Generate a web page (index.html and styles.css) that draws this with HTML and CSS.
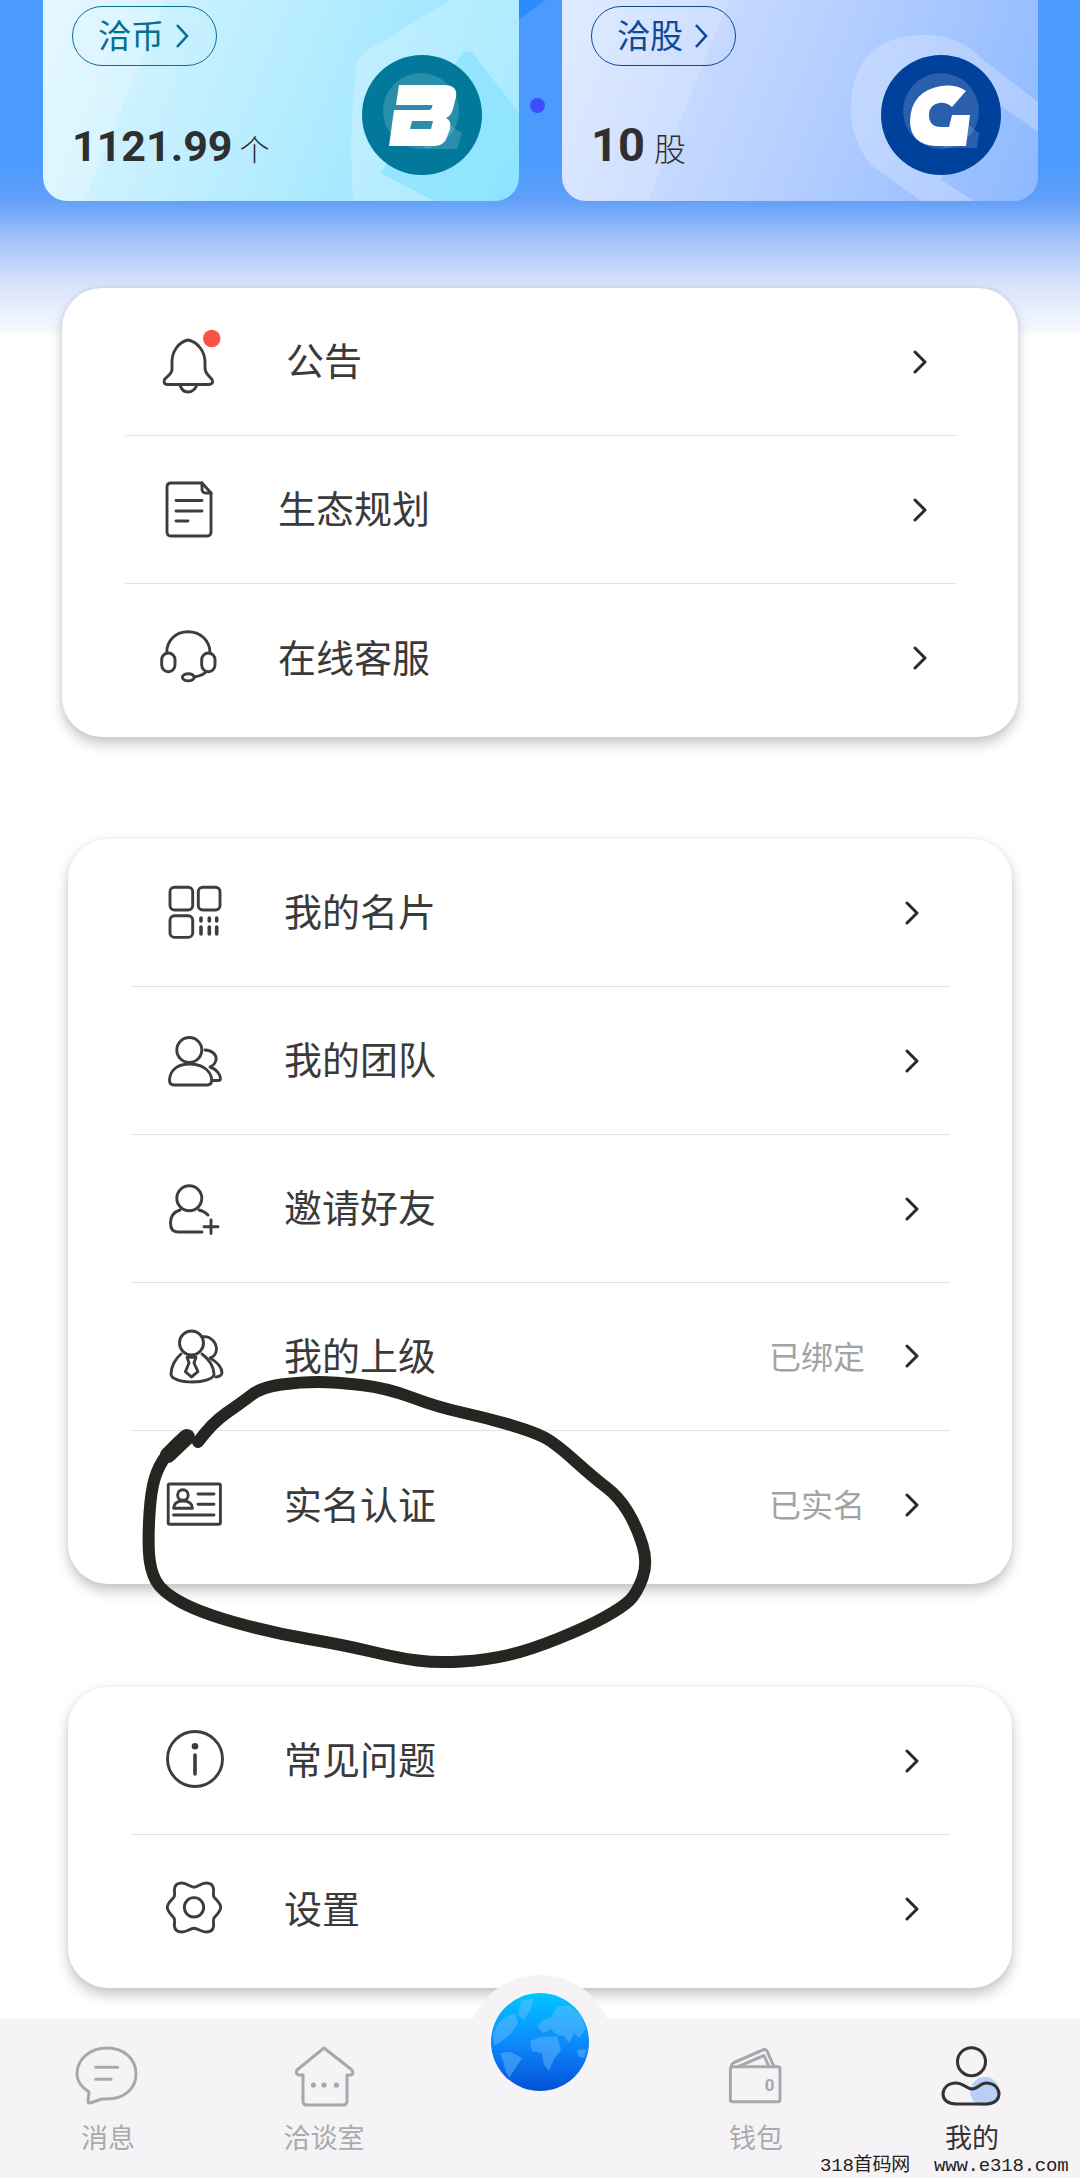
FILE: index.html
```html
<!DOCTYPE html>
<html lang="zh-CN">
<head>
<meta charset="utf-8">
<title>我的</title>
<link rel="stylesheet" href="styles.css">
</head>
<body>
<div class="page">
  <header class="hero">
    <span class="hero-wedge"></span>
    <span class="hero-dot"></span>
    <section class="asset asset-coin">
      <svg class="asset-decor" viewBox="0 0 476 201"><path class="decor-a" d="M314 63 Q320 50 335 44 L407 0 L476 0 L476 143 L440 201 L310 201 Q305 130 314 63Z"/><path class="decor-b" d="M337 173 L420 53 Q426 48 432 56 L476 113 L476 143 L440 201 L392 201Z"/></svg>
      <a class="pill pill-coin">洽币<svg class="pill-arrow" viewBox="0 0 14 26"><path d="M2 2 L12 13 L2 24"/></svg></a>
      <div class="amount"><b class="amount-num">1121.99</b><span class="amount-unit">个</span></div>
      <svg class="asset-logo" viewBox="0 0 120 120">
        <circle class="logo-coin" cx="60" cy="60" r="60"/>
        <circle class="logo-q" cx="59" cy="56" r="38"/><path class="logo-q" d="M75 62 L100 78 L95 94 L62 94Z"/>
        <path class="logo-mark" fill-rule="evenodd" d="M37 30 L82 30 Q96 30 94 42 L91 54 Q89 61 84 63 Q90 66 88 74 L85 82 Q82 91 72 91 L27 91 L32 55 L67 55 Q70 55 70.5 50 L34 50Z M50 66 L71 66 L69 74 L48 74Z"/>
      </svg>
    </section>
    <section class="asset asset-share">
      <svg class="asset-decor" viewBox="0 0 476 201"><path class="decor-a" d="M364 35 Q397 35 419 58 L476 102 L476 132 L424 95 L379 180 L412 201 L359 201 L309 165 Q289 140 289 110 Q289 35 364 35Z"/></svg>
      <a class="pill pill-share">洽股<svg class="pill-arrow" viewBox="0 0 14 26"><path d="M2 2 L12 13 L2 24"/></svg></a>
      <div class="amount amount-share"><b class="amount-num">10</b><span class="amount-unit">股</span></div>
      <svg class="asset-logo" viewBox="0 0 120 120">
        <circle class="logo-share" cx="60" cy="60" r="60"/>
        <circle class="logo-q" cx="60" cy="56" r="38"/><path class="logo-q" d="M78 62 L98 78 L96 93 L62 93Z"/>
        <path class="logo-mark" d="M85 36 L71 52 Q65 47 58 48 Q48 50 48 60 Q48 72 60 72 L68 72 L71 60 L89 60 L85 91 L54 91 Q29 89 29 66 Q30 36 60 31 Q75 29 85 36Z"/>
      </svg>
    </section>
  </header>

  <main class="menus">
    <section class="menu menu-top">
      <div class="row">
        <div class="icon-box"><svg class="icon" viewBox="0 0 60 60"><path d="M30.3 8 C20 10 14 20 14 30 L14 37 Q14 41 10 44 L6.5 47.5 Q5 52 9 52.5 L51 52.5 Q56 52 54 47.5 L50 43 Q47 40 47 36 L47 30 C47 20 40 10 30.3 8Z"/><path d="M22 53 Q24 60 30 60 Q36 60 39 53"/><circle class="bell-dot" cx="53.7" cy="6.5" r="8.7"/></svg></div>
        <span class="row-title row-title-inset">公告</span>
        <div class="row-end"><svg class="chevron" viewBox="0 0 14 24"><path d="M2 2 L12 12 L2 22"/></svg></div>
      </div>
      <div class="row">
        <div class="icon-box"><svg class="icon" viewBox="0 0 60 60"><path d="M13 3 L44 3 L53 13 L53 52 Q53 56 49 56 L13 56 Q9 56 9 52 L9 7 Q9 3 13 3Z"/><path d="M44 3 L44 9 Q44 13 48 13 L53 13"/><path d="M18 20.5 H44 M18 31 H44 M18 41 H30"/></svg></div>
        <span class="row-title">生态规划</span>
        <div class="row-end"><svg class="chevron" viewBox="0 0 14 24"><path d="M2 2 L12 12 L2 22"/></svg></div>
      </div>
      <div class="row">
        <div class="icon-box"><svg class="icon" viewBox="0 0 60 60"><path d="M8.7 25 C8.7 12 18 3.7 30 3.7 C42 3.7 52 12 52 25"/><rect x="3.7" y="25" width="13.3" height="18.7" rx="6.6"/><rect x="43.7" y="25" width="13.3" height="18.7" rx="6.6"/><path d="M48 43.7 Q46 47 36 49"/><ellipse cx="30.3" cy="49.3" rx="6" ry="3.6"/></svg></div>
        <span class="row-title">在线客服</span>
        <div class="row-end"><svg class="chevron" viewBox="0 0 14 24"><path d="M2 2 L12 12 L2 22"/></svg></div>
      </div>
    </section>

    <section class="menu">
      <div class="row">
        <div class="icon-box"><svg class="icon" viewBox="-1 0 60 60"><rect x="5" y="4.3" width="22.7" height="22.7" rx="4.5"/><rect x="33.3" y="4.3" width="21.7" height="22.7" rx="4.5"/><rect x="5" y="32.7" width="22.7" height="21.7" rx="4.5"/><path class="thick" d="M36 35 V38 M44.3 35 V38 M51.7 35 V38 M36 44 V51 M44.3 44 V51 M51.7 44 V51"/></svg></div>
        <span class="row-title">我的名片</span>
        <div class="row-end"><svg class="chevron" viewBox="0 0 14 24"><path d="M2 2 L12 12 L2 22"/></svg></div>
      </div>
      <div class="row">
        <div class="icon-box"><svg class="icon" viewBox="-1 0 60 60"><circle cx="24.3" cy="19" r="12.5"/><path d="M9 54 Q4.5 54 4.5 49 C5 38 14 33 24.5 33 C35 33 46 38 46.7 49 Q46.7 54 42 54Z"/><path d="M40 19 C47 19 52 24 51 29 C50 33 48 35 45 36 C51 38 55.5 43 55.5 48 Q55.5 49.5 53 49.5 L47 49.5"/></svg></div>
        <span class="row-title">我的团队</span>
        <div class="row-end"><svg class="chevron" viewBox="0 0 14 24"><path d="M2 2 L12 12 L2 22"/></svg></div>
      </div>
      <div class="row">
        <div class="icon-box"><svg class="icon" viewBox="-1 0 60 60"><circle cx="24.3" cy="19.3" r="12.5"/><path d="M15 31 Q5.5 34 5.5 44 Q5.5 53 13 53 L37 53"/><path d="M34 31 Q39 32 43 36"/><path d="M39 47.7 H53 M46 41 V54.5"/></svg></div>
        <span class="row-title">邀请好友</span>
        <div class="row-end"><svg class="chevron" viewBox="0 0 14 24"><path d="M2 2 L12 12 L2 22"/></svg></div>
      </div>
      <div class="row">
        <div class="icon-box"><svg class="icon" viewBox="-1 0 60 60"><circle cx="26.5" cy="16" r="12"/><path d="M38 9.7 C46 9 52 16 51.4 23 C51 27 48 30 45 31 C52 35 57 40 57 46 C57 48 54 50 50.7 50"/><path d="M16 27 C10 32 6 40 6 47 C6 52 16 55 27.5 55 C38 55 49 52 49 47 C49 40 44 32 37 27"/><path d="M22 30.3 H31 L29 36 L33 44.7 L26.4 50 L20.4 44.7 L24 36Z"/></svg></div>
        <span class="row-title">我的上级</span>
        <div class="row-end"><span class="row-status">已绑定</span><svg class="chevron" viewBox="0 0 14 24"><path d="M2 2 L12 12 L2 22"/></svg></div>
      </div>
      <div class="row">
        <div class="icon-box"><svg class="icon" viewBox="-1 0 60 60"><rect x="3.2" y="9" width="52.2" height="40.3" rx="1.5"/><circle cx="17.9" cy="20" r="5.3"/><path d="M8.6 33.3 Q9 26 17.9 26 Q27 26 27.5 33.3Z"/><path d="M33 19 H49 M33 29.3 H49 M8.6 40 H49"/></svg></div>
        <span class="row-title">实名认证</span>
        <div class="row-end"><span class="row-status">已实名</span><svg class="chevron" viewBox="0 0 14 24"><path d="M2 2 L12 12 L2 22"/></svg></div>
      </div>
    </section>

    <section class="menu">
      <div class="row">
        <div class="icon-box"><svg class="icon" viewBox="-1 0 60 60"><circle cx="30" cy="28" r="27.5"/><circle class="icon-fill" cx="30" cy="15.3" r="3.3"/><path class="thick" d="M30 24 V43"/></svg></div>
        <span class="row-title">常见问题</span>
        <div class="row-end"><svg class="chevron" viewBox="0 0 14 24"><path d="M2 2 L12 12 L2 22"/></svg></div>
      </div>
      <div class="row">
        <div class="icon-box"><svg class="icon" viewBox="-1 0 60 60"><path d="M29 8.3 C33 8.3 36 4 41 4 C46 4 48 6 48.5 9.5 C49 14 47.5 15.5 49 18 C51 21 55.7 24 55.7 28.3 C55.7 33 51 36 49 39 C47.5 41.5 49 43 48.5 47.5 C48 51 46 53 41 53 C36 53 33 49.3 29 49.3 C25 49.3 22 53 17 53 C12 53 10 51 9.5 47.5 C9 43 10.5 41.5 9 39 C7 36 2.3 33 2.3 28.3 C2.3 24 7 21 9 18 C10.5 15.5 9 14 9.5 9.5 C10 6 12 4 17 4 C22 4 25 8.3 29 8.3Z"/><circle cx="29" cy="28.3" r="9.7"/></svg></div>
        <span class="row-title">设置</span>
        <div class="row-end"><svg class="chevron" viewBox="0 0 14 24"><path d="M2 2 L12 12 L2 22"/></svg></div>
      </div>
    </section>
  </main>

  <nav class="tabbar">
    <a class="tab">
      <svg class="tab-icon" viewBox="0 0 60 60"><path d="M11 47 C3 42 -1 36 -1 29 C-1 14 12 3 29 3 C46 3 58 14 58 29 C58 44 46 54 29 54 L24 54 L12 58 Q9.5 58.5 10 56Z"/><path d="M17.7 22.3 H39.8 M17.7 34.3 H33"/></svg>
      <span>消息</span>
    </a>
    <a class="tab">
      <svg class="tab-icon" viewBox="0 0 60 60"><path d="M30 3 L58 25 Q60 29 57 30 L53 30 L53 56 Q53 60 49 60 L13 60 Q9 60 9 56 L9 30 L5 30 Q1 29 3 25Z"/><circle class="tab-fill" cx="19.4" cy="40" r="2.6"/><circle class="tab-fill" cx="30" cy="40" r="2.6"/><circle class="tab-fill" cx="42.4" cy="40" r="2.6"/></svg>
      <span>洽谈室</span>
    </a>
    <div class="tab tab-hub-slot"></div>
    <a class="tab">
      <svg class="tab-icon" viewBox="0 0 60 60"><rect x="4.4" y="21.7" width="49.6" height="35" rx="2"/><path d="M5.5 22 Q5 19 8 17.5 L38 4.5 Q40 4 41 6 L48 21.7"/><path d="M12 21.7 L38 10.5 L43 21.7"/><text class="wallet-zero" x="43.7" y="45.5">0</text></svg>
      <span>钱包</span>
    </a>
    <a class="tab tab-active">
      <svg class="tab-icon" viewBox="0 0 60 60"><circle class="me-spot" cx="42.9" cy="46.7" r="14.6"/><circle cx="29.5" cy="16.7" r="14"/><path d="M14 38 C22 38 24 44 30 44 C36 44 38 38 44 38 C52 38 57 43 57 49 C57 55 52 59 44 59 L14 59 C6 59 1 55 1 49 C1 43 6 38 14 38Z"/></svg>
      <span>我的</span>
    </a>
  </nav>

  <div class="hub">
    <svg class="globe" viewBox="0 0 98 98">
      <defs><linearGradient id="globeFill" x1="0" y1="0" x2="0" y2="1"><stop offset="0" stop-color="#00c6ff"/><stop offset=".5" stop-color="#0c8bfb"/><stop offset="1" stop-color="#0450d8"/></linearGradient></defs>
      <circle cx="49" cy="49" r="49" fill="url(#globeFill)"/>
      <g class="land">
        <path d="M30 8 L43 5 L40 16 L33 27 L27 22Z"/>
        <path d="M6 32 L14 24 L24 20 L27 30 L22 38 L16 44 L8 50 L3 52 L2 42Z"/>
        <path d="M9 60 L20 59 L31 65 L24 76 L18 85 L14 76 L12 68Z"/>
        <path d="M39 48 L50 44 L66 43 L70 57 L63 66 L58 78 L53 72 L51 60 L41 58Z"/>
        <path d="M46 33 L52 27 L60 24 L66 14 L78 12 L90 22 L95 36 L88 45 L83 40 L78 50 L73 43 L66 42 L60 36 L52 40Z"/>
        <path d="M86 57 L96 56 L93 65 L87 63Z"/>
      </g>
    </svg>
  </div>

  <svg class="scribble" viewBox="0 0 1080 2178">
    <path d="M198 1442 Q212 1423 226.5 1413 Q241 1403 251.5 1395 Q262 1387 281.5 1384.5 Q301 1382 318 1382 Q335 1382 361 1385 Q387 1388 412 1397.5 Q437 1407 462 1412.5 Q487 1418 510.5 1425 Q534 1432 544.5 1437.5 Q555 1443 574.5 1460.5 Q594 1478 606.5 1487.5 Q619 1497 628 1512 Q637 1527 642.5 1545 Q648 1563 642.5 1578 Q637 1593 630 1600 Q623 1607 605 1617 Q587 1627 558.5 1638.5 Q530 1650 508.5 1655 Q487 1660 462 1661.5 Q437 1663 417.5 1660.5 Q398 1658 371 1651.5 Q344 1645 308.5 1639 Q273 1633 237 1623 Q201 1613 181.5 1602.5 Q162 1592 156 1581 Q150 1570 149 1553.5 Q148 1537 149.5 1513.5 Q151 1490 155 1477.5 Q159 1465 166 1456 Q173 1447 179 1441.5 L185 1436"/>
    <path class="scribble-end" d="M168 1455 L187 1437"/>
  </svg>

  <div class="watermark"><span>318首码网</span><span>www.e318.com</span></div>
</div>
</body>
</html>
```

FILE: styles.css
```css
* { box-sizing: border-box; }

html, body { margin: 0; padding: 0; }

body {
  background: #fff;
  font-family: "Noto Sans CJK SC", Roboto, sans-serif;
}

.page {
  position: relative;
  width: 1080px;
  height: 2178px;
  overflow: hidden;
  display: flex;
  flex-direction: column;
  background: #fff;
}

/* hero */
.hero {
  position: relative;
  height: 333px;
  flex: none;
  display: flex;
  gap: 43px;
  padding: 0 43px;
  align-items: flex-start;
  background: linear-gradient(#4b9bff 0, #4b9bff 160px, #619ff8 200px, #a5c3f8 240px, #d8e3fb 285px, #f8faff 333px);
}

.hero-wedge {
  position: absolute;
  left: 518px;
  top: 0;
  width: 28px;
  height: 20px;
  background: #2d8bff;
  clip-path: polygon(0 0, 100% 0, 0 100%);
}

.hero-dot {
  position: absolute;
  left: 530px;
  top: 98px;
  width: 15px;
  height: 15px;
  border-radius: 50%;
  background: #3f4dff;
}

.asset {
  position: relative;
  width: 476px;
  height: 201px;
  flex: none;
  padding: 6px 0 0 29px;
  border-radius: 0 0 24px 24px;
  overflow: hidden;
}

.asset-coin {
  background:
    linear-gradient(112deg, rgba(255, 255, 255, .22) 0 22%, rgba(255, 255, 255, 0) 22% 100%),
    linear-gradient(112deg, #dff6ff 0%, #b6ecff 50%, #8ae3ff 100%);
}

.asset-share {
  background:
    linear-gradient(112deg, rgba(255, 255, 255, .14) 0 30%, rgba(255, 255, 255, 0) 30% 100%),
    linear-gradient(112deg, #dce8ff 0%, #b7d0ff 50%, #8db8ff 100%);
}

.asset-decor {
  position: absolute;
  left: 0;
  top: 0;
  width: 100%;
  height: 100%;
}

.decor-a { fill: rgba(255, 255, 255, .24); }
.decor-b { fill: #8ae3ff; opacity: .75; }

.pill {
  position: relative;
  display: flex;
  align-items: center;
  width: 145px;
  height: 60px;
  padding: 0 0 3px 25px;
  gap: 11px;
  border: 1.5px solid currentColor;
  border-radius: 30px;
  font-size: 33px;
  line-height: 1;
}

.pill-coin { color: #05708f; }
.pill-share { color: #0d4a96; }

.pill-arrow {
  width: 14px;
  height: 26px;
  margin-top: 3px;
  fill: none;
  stroke: currentColor;
  stroke-width: 2.6;
}

.amount {
  position: relative;
  display: flex;
  align-items: baseline;
  gap: 7px;
  margin-top: 50px;
  height: 60px;
  color: #2f2f2f;
  font-family: Roboto, "Noto Sans CJK SC", sans-serif;
}

.amount-share {
  margin-top: 49px;
  gap: 9px;
}

.amount-num {
  font-size: 43px;
  font-weight: 700;
  line-height: 60px;
}

.amount-share .amount-num { font-size: 47px; }

.amount-unit {
  font-family: "Noto Sans CJK SC", sans-serif;
  font-size: 30px;
  font-weight: 300;
  line-height: 60px;
}

.amount-share .amount-unit { font-size: 32px; }

.asset-logo {
  position: absolute;
  left: 319px;
  top: 55px;
  width: 120px;
  height: 120px;
}

.logo-coin { fill: #02799a; }
.logo-share { fill: #00419c; }
.logo-q { fill: rgba(255, 255, 255, .16); }
.logo-mark { fill: #fff; }

/* menus */
.menus {
  flex: none;
  display: flex;
  flex-direction: column;
  align-items: center;
  gap: 103px;
  margin-top: -45px;
}

.menu {
  position: relative;
  width: 944px;
  padding: 0 62px 5px 63px;
  background: #fff;
  border-radius: 40px;
  box-shadow: 0 7px 13px rgba(0, 0, 0, .22), 0 0 6px rgba(0, 0, 0, .05);
}

.menu-top {
  width: 956px;
  margin-bottom: -1px;
}

.row {
  display: flex;
  align-items: center;
  height: 148px;
  padding-right: 31px;
  border-bottom: 1px solid #e2e2e2;
}

.menu-top .row { padding-right: 29px; }

.row:last-child { border-bottom: 0; }

.icon-box {
  width: 126px;
  height: 60px;
  flex: none;
  display: flex;
  align-items: center;
  justify-content: center;
  margin-right: 27px;
}

.icon {
  width: 60px;
  height: 60px;
  overflow: visible;
  fill: none;
  stroke: #3d3d3d;
  stroke-width: 2.9;
  stroke-linejoin: round;
  stroke-linecap: round;
}

.icon .thick { stroke-width: 3.6; }
.icon-fill { fill: #3d3d3d; stroke: none; }
.bell-dot { fill: #fb5246; stroke: none; }

.row-title {
  padding-bottom: 5px;
  color: #3a3a3a;
  font-size: 38px;
  line-height: 1.2;
}

.row-title-inset { margin-left: 8px; }

.row-end {
  margin-left: auto;
  display: flex;
  align-items: center;
  gap: 40px;
}

.row-status {
  padding-bottom: 3px;
  color: #a3a3a3;
  font-size: 32px;
  line-height: 1.2;
}

.chevron {
  width: 14px;
  height: 24px;
  fill: none;
  stroke: #2a2a2a;
  stroke-width: 3;
  stroke-linecap: round;
  stroke-linejoin: round;
}

/* tab bar */
.tabbar {
  position: absolute;
  left: 0;
  right: 0;
  bottom: 0;
  height: 159px;
  display: grid;
  grid-template-columns: repeat(5, 1fr);
  background: #f5f3f6;
}

.tab {
  display: flex;
  flex-direction: column;
  align-items: center;
  padding-top: 26px;
  gap: 12px;
  color: #a8abad;
  font-size: 27px;
  line-height: 40px;
}

.tab-active { color: #333; }

.tab-icon {
  width: 60px;
  height: 60px;
  flex: none;
  overflow: visible;
  fill: none;
  stroke: #a6a9ab;
  stroke-width: 3;
  stroke-linejoin: round;
  stroke-linecap: round;
}

.tab-fill { fill: #a6a9ab; stroke: none; }

.wallet-zero {
  fill: #a6a9ab;
  stroke: none;
  font-family: Roboto, sans-serif;
  font-size: 17px;
  font-weight: 700;
  text-anchor: middle;
}

.tab-active .tab-icon { stroke: #333; }
.me-spot { fill: #b8d0f6; stroke: none; }

.hub {
  position: absolute;
  left: 466px;
  top: 1975px;
  width: 148px;
  height: 148px;
  display: flex;
  justify-content: center;
  padding-top: 18px;
  border-radius: 50%;
  background: #f5f3f6;
}

.globe {
  width: 98px;
  height: 98px;
}

.land { fill: rgba(110, 190, 255, .45); }

/* overlays */
.scribble {
  position: absolute;
  left: 0;
  top: 0;
  width: 1080px;
  height: 2178px;
  pointer-events: none;
  fill: none;
  stroke: #252622;
  stroke-width: 12;
  stroke-linecap: round;
  stroke-linejoin: round;
}

.scribble .scribble-end { stroke-width: 16; }

.watermark {
  position: absolute;
  left: 820px;
  top: 2155px;
  display: flex;
  gap: 24px;
  color: #222;
  font-family: "Liberation Mono", "Noto Sans CJK SC", monospace;
  font-size: 19px;
  line-height: 22px;
  letter-spacing: -.2px;
  white-space: nowrap;
}
```
